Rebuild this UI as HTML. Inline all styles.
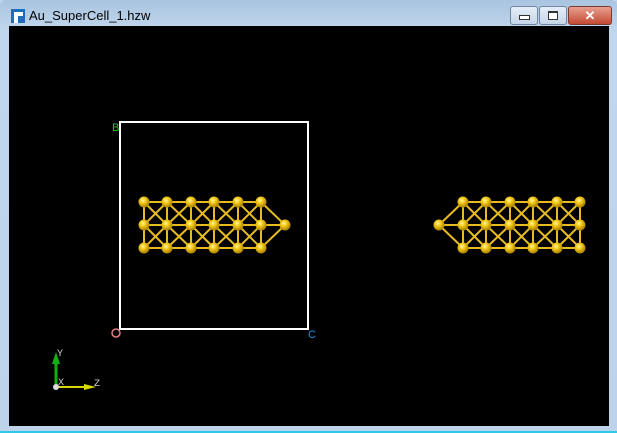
<html><body style="margin:0;width:617px;height:433px;overflow:hidden;background:#bcd3ea">
<div style="position:absolute;left:0;top:0;width:617px;height:433px;background:linear-gradient(#a9c4e0,#c0d6ec 30px,#bcd3ea);border-radius:6px 6px 0 0"></div>
<div style="position:absolute;left:0;top:431px;width:617px;height:2px;background:#2ec8e8"></div>
<div style="position:absolute;left:11px;top:9px;width:14px;height:14px;background:#1a6ec0"></div>
<div style="position:absolute;left:14px;top:12px;width:4px;height:11px;background:#fff"></div>
<div style="position:absolute;left:18px;top:12px;width:5px;height:4px;background:#fff"></div>
<div style="position:absolute;left:29px;top:8px;font:13px 'Liberation Sans',sans-serif;color:#000">Au_SuperCell_1.hzw</div>
<div style="position:absolute;left:510px;top:6px;width:26px;height:17px;border:1px solid #6f85a0;border-radius:3px;background:linear-gradient(#e6eef8,#c5d5e8)"><div style="position:absolute;left:8px;top:8px;width:9px;height:3px;border:1px solid #333;background:#fff"></div></div>
<div style="position:absolute;left:539px;top:6px;width:26px;height:17px;border:1px solid #6f85a0;border-radius:3px;background:linear-gradient(#e6eef8,#c5d5e8)"><div style="position:absolute;left:8px;top:4px;width:8px;height:6px;border:1px solid #333;border-top-width:2px;background:#fff"></div></div>
<div style="position:absolute;left:568px;top:6px;width:42px;height:17px;border:1px solid #7a3a30;border-radius:3px;background:linear-gradient(#e8a090,#c44a32);color:#fff;font:bold 13px 'Liberation Sans',sans-serif;text-align:center;line-height:17px">✕</div>
<svg style="position:absolute;left:9px;top:26px" width="600" height="400" viewBox="9 26 600 400">
<rect x="9" y="26" width="600" height="400" fill="#000"/>
<rect x="120" y="122" width="188" height="207" fill="none" stroke="#fff" stroke-width="2"/>
<text x="112" y="131" font-family="Liberation Sans" font-size="11" fill="#1ec81e">B</text>
<text x="308" y="338" font-family="Liberation Sans" font-size="11" fill="#1e8ee0">C</text>
<circle cx="116" cy="333" r="4" fill="none" stroke="#e08080" stroke-width="1.5"/>
<g stroke="#e8bc20" stroke-width="2">
<path d="M144 202H261M144 225H285M144 248H261M144 202V248M167 202V248M191 202V248M214 202V248M238 202V248M261 202V248
M144 202L167 225L144 248M144 225L167 202M144 225L167 248
M167 202L191 225L167 248M167 225L191 202M167 225L191 248
M191 202L214 225L191 248M191 225L214 202M191 225L214 248
M214 202L238 225L214 248M214 225L238 202M214 225L238 248
M238 202L261 225L238 248M238 225L261 202M238 225L261 248
M261 202L285 225L261 248"/>
<path d="M463 202H580M439 225H580M463 248H580M463 202V248M486 202V248M510 202V248M533 202V248M557 202V248M580 202V248
M463 202L486 225L463 248M463 225L486 202M463 225L486 248
M486 202L510 225L486 248M486 225L510 202M486 225L510 248
M510 202L533 225L510 248M510 225L533 202M510 225L533 248
M533 202L557 225L533 248M533 225L557 202M533 225L557 248
M557 202L580 225L557 248M557 225L580 202M557 225L580 248
M439 225L463 202M439 225L463 248"/>
</g>
<defs><radialGradient id="g" cx="0.4" cy="0.35" r="0.6"><stop offset="0" stop-color="#fff8a0"/><stop offset="0.45" stop-color="#f5c818"/><stop offset="1" stop-color="#b08800"/></radialGradient></defs>
<g fill="url(#g)">
<circle cx="144" cy="202" r="5.5"/><circle cx="167" cy="202" r="5.5"/><circle cx="191" cy="202" r="5.5"/><circle cx="214" cy="202" r="5.5"/><circle cx="238" cy="202" r="5.5"/><circle cx="261" cy="202" r="5.5"/>
<circle cx="144" cy="225" r="5.5"/><circle cx="167" cy="225" r="5.5"/><circle cx="191" cy="225" r="5.5"/><circle cx="214" cy="225" r="5.5"/><circle cx="238" cy="225" r="5.5"/><circle cx="261" cy="225" r="5.5"/><circle cx="285" cy="225" r="5.5"/>
<circle cx="144" cy="248" r="5.5"/><circle cx="167" cy="248" r="5.5"/><circle cx="191" cy="248" r="5.5"/><circle cx="214" cy="248" r="5.5"/><circle cx="238" cy="248" r="5.5"/><circle cx="261" cy="248" r="5.5"/>
<circle cx="463" cy="202" r="5.5"/><circle cx="486" cy="202" r="5.5"/><circle cx="510" cy="202" r="5.5"/><circle cx="533" cy="202" r="5.5"/><circle cx="557" cy="202" r="5.5"/><circle cx="580" cy="202" r="5.5"/>
<circle cx="439" cy="225" r="5.5"/><circle cx="463" cy="225" r="5.5"/><circle cx="486" cy="225" r="5.5"/><circle cx="510" cy="225" r="5.5"/><circle cx="533" cy="225" r="5.5"/><circle cx="557" cy="225" r="5.5"/><circle cx="580" cy="225" r="5.5"/>
<circle cx="463" cy="248" r="5.5"/><circle cx="486" cy="248" r="5.5"/><circle cx="510" cy="248" r="5.5"/><circle cx="533" cy="248" r="5.5"/><circle cx="557" cy="248" r="5.5"/><circle cx="580" cy="248" r="5.5"/>
</g>
<line x1="56" y1="387" x2="56" y2="362" stroke="#10b010" stroke-width="3"/>
<polygon points="56,352 52,364 60,364" fill="#10b010"/>
<line x1="56" y1="387" x2="86" y2="387" stroke="#d8d800" stroke-width="2"/>
<polygon points="96,387 84,384 84,390" fill="#d8d800"/>
<circle cx="56" cy="387" r="3" fill="#ddd"/>
<text x="57" y="356" font-family="Liberation Mono" font-size="10" fill="#ccc">Y</text>
<text x="58" y="385" font-family="Liberation Mono" font-size="10" fill="#ccc">X</text>
<text x="94" y="386" font-family="Liberation Mono" font-size="10" fill="#ccc">Z</text>
</svg>
</body></html>
